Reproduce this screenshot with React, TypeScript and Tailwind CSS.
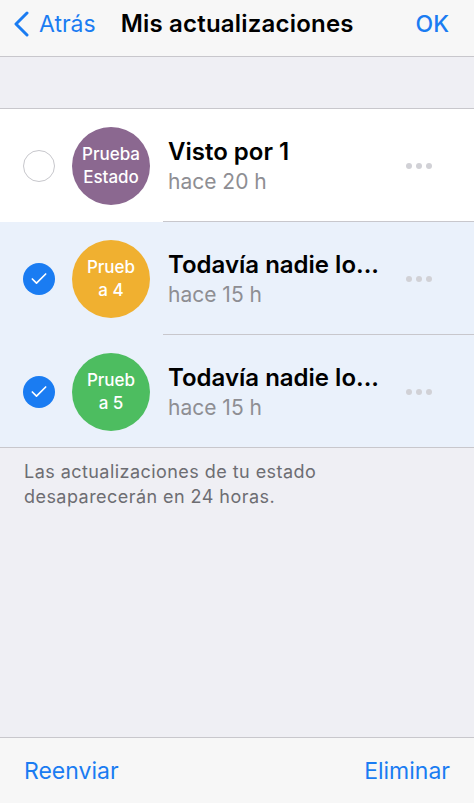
import { Check } from "lucide-react";

type Update = {
  id: number;
  label: string[];
  color: string;
  title: string;
  time: string;
  selected: boolean;
};

const updates: Update[] = [
  { id: 1, label: ["Prueba", "Estado"], color: "bg-[#8b6890]", title: "Visto por 1", time: "hace 20 h", selected: false },
  { id: 2, label: ["Prueb", "a 4"], color: "bg-[#f0b030]", title: "Todavía nadie lo...", time: "hace 15 h", selected: true },
  { id: 3, label: ["Prueb", "a 5"], color: "bg-[#4dbd60]", title: "Todavía nadie lo...", time: "hace 15 h", selected: true },
];

function UpdateRow({ item, last }: { item: Update; last: boolean }) {
  return (
    <div className={`relative flex h-[113px] items-center ${item.selected ? "bg-[#eaf1fb]" : "bg-white"}`}>
      {/* select circle */}
      <div className="ml-[22px] flex w-[33px] justify-center">
        {item.selected ? (
          <div className="flex h-[32px] w-[32px] items-center justify-center rounded-full bg-[#1a7cf2]">
            <Check size={20} strokeWidth={2} className="text-white" />
          </div>
        ) : (
          <div className="h-[32px] w-[32px] rounded-full border-[1.5px] border-[#c7c7cc]" />
        )}
      </div>

      <div
        className={`ml-[17px] flex h-[78px] w-[78px] flex-col items-center justify-center rounded-full ${item.color} text-[17px] font-medium leading-[23px] text-white`}
      >
        {item.label.map((l) => (
          <span key={l}>{l}</span>
        ))}
      </div>

      <div className="ml-[18px] flex flex-1 flex-col">
        <span className="text-[24px] font-semibold leading-[30px] text-black">{item.title}</span>
        <span className="mt-[2px] text-[21px] leading-[26px] text-[#8e8e93]">{item.time}</span>
      </div>

      <div className="mr-[42px] flex gap-[4px]">
        <span className="h-[6px] w-[6px] rounded-full bg-[#d1d1d6]" />
        <span className="h-[6px] w-[6px] rounded-full bg-[#d1d1d6]" />
        <span className="h-[6px] w-[6px] rounded-full bg-[#d1d1d6]" />
      </div>

      <div
        className={`absolute bottom-0 right-0 h-px bg-[#c8c7cc] ${last ? "left-0" : "left-[163px]"}`}
      />
    </div>
  );
}

export default function App() {
  return (
    <div
      className="flex h-[803px] w-[474px] flex-col bg-[#efeff4]"
      style={{ fontFamily: "Inter, 'Noto Sans', sans-serif" }}
    >
      {/* Nav bar */}
      <div className="flex h-[57px] items-center border-b border-[#c8c7cc] bg-[#f7f7f7] px-[13px] pb-[8px]">
        <div className="flex items-center text-[#1a7cf2]">
          <svg width="17" height="26" viewBox="0 0 17 26" fill="none">
            <path d="M14 2 L3 13 L14 24" stroke="currentColor" strokeWidth="3" strokeLinecap="round" strokeLinejoin="round" />
          </svg>
          <span className="ml-[9px] text-[23px] leading-none">Atrás</span>
        </div>
        <span className="ml-[25px] text-[24px] font-semibold leading-none tracking-[0.2px] text-black">
          Mis actualizaciones
        </span>
        <span className="ml-auto mr-[12px] text-[23px] font-medium leading-none text-[#1a7cf2]">OK</span>
      </div>

      <div className="h-[52px] border-b border-[#c8c7cc]" />

      <div>
        {updates.map((u, i) => (
          <UpdateRow key={u.id} item={u} last={i === updates.length - 1} />
        ))}
      </div>

      <p className="px-[24px] pt-[11px] text-[18px] leading-[25px] tracking-[0.45px] text-[#6d6d72]">
        Las actualizaciones de tu estado
        <br />
        desaparecerán en 24 horas.
      </p>

      <div className="flex-1" />

      <div className="flex h-[66px] items-center justify-between border-t border-[#c8c7cc] bg-[#f7f7f7] px-[24px] pt-[2px] text-[23px] text-[#1a7cf2]">
        <span>Reenviar</span>
        <span>Eliminar</span>
      </div>
    </div>
  );
}
